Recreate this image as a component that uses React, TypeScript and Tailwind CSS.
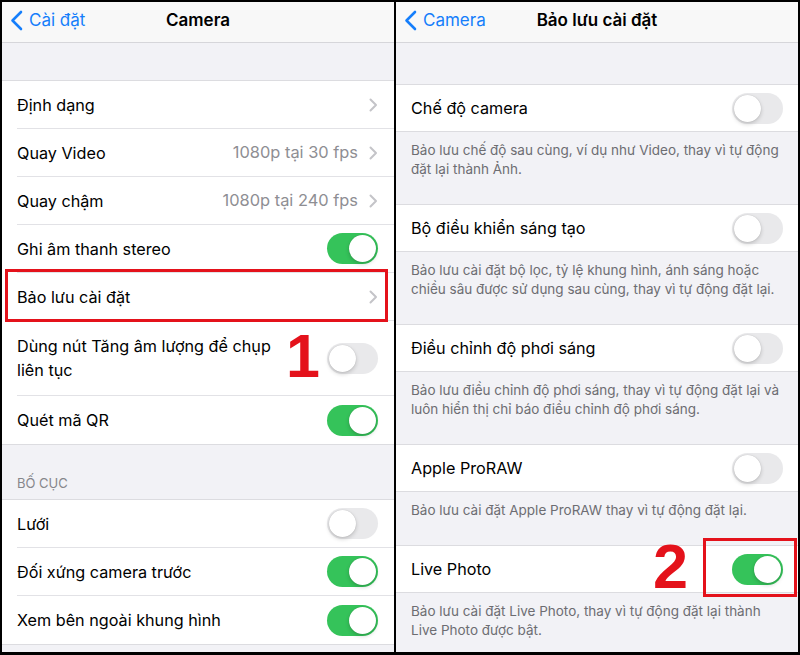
import React from "react";

type RowType = {
  label: React.ReactNode;
  value?: string;
  chevron?: boolean;
  toggle?: boolean;
  on?: boolean;
  tall?: boolean;
};

const Toggle = ({ on }: { on?: boolean }) => (
  <div
    className={`relative h-[31px] w-[51px] shrink-0 rounded-full ${
      on ? "bg-[#35c35a]" : "bg-[#e9e9eb]"
    }`}
  >
    <div
      className={`absolute top-[2px] h-[27px] w-[27px] rounded-full bg-white shadow-[0_2px_4px_rgba(0,0,0,0.18),0_0_1px_rgba(0,0,0,0.2)] ${
        on ? "left-[22px]" : "left-[2px]"
      }`}
    />
  </div>
);

const Chevron = () => (
  <svg width="9" height="14" viewBox="0 0 9 14" className="shrink-0">
    <polyline
      points="1.5,1.5 7,7 1.5,12.5"
      fill="none"
      stroke="#c4c4c8"
      strokeWidth="2"
      strokeLinecap="round"
      strokeLinejoin="round"
    />
  </svg>
);

const BackChevron = () => (
  <svg width="13" height="21" viewBox="0 0 13 21" className="shrink-0">
    <polyline
      points="11,2 2.5,10.5 11,19"
      fill="none"
      stroke="#157efb"
      strokeWidth="2.6"
      strokeLinecap="round"
      strokeLinejoin="round"
    />
  </svg>
);

const NavBar = ({ back, title }: { back: string; title: string }) => (
  <div className="relative flex h-[41px] items-center border-b border-[#d6d6da] bg-[#f8f8f8] pb-[3px]">
    <div className="flex items-center gap-[6px] pl-[8px] text-[17px] text-[#157efb]">
      <BackChevron />
      <span>{back}</span>
    </div>
    <div className="absolute inset-x-0 top-0 flex h-[38px] items-center justify-center text-[17px] font-semibold text-black">
      {title}
    </div>
  </div>
);

const Group = ({ rows }: { rows: RowType[] }) => (
  <div className="border-y border-[#dcdce0] bg-white pl-[15px]">
    {rows.map((r, i) => (
      <div
        key={i}
        className={`flex items-center pr-[16px] ${
          r.tall ? "py-[13px]" : "h-[48px]"
        } ${i < rows.length - 1 ? "border-b border-[#e2e2e6]" : ""}`}
      >
        <div className="flex-1 text-[16.2px] leading-[24px] text-black">
          {r.label}
        </div>
        {r.value && (
          <span className="mr-[11px] text-[16.4px] text-[#8e8e93]">
            {r.value}
          </span>
        )}
        {r.chevron && <Chevron />}
        {r.toggle && <Toggle on={r.on} />}
      </div>
    ))}
  </div>
);

const SettingWithNote = ({
  label,
  on,
  note,
}: {
  label: string;
  on?: boolean;
  note: React.ReactNode;
}) => (
  <div>
    <div className="flex h-[48px] items-center border-y border-[#dcdce0] bg-white pl-[15px] pr-[15px]">
      <div className="flex-1 text-[16.2px] text-black">{label}</div>
      <Toggle on={on} />
    </div>
    <div className="px-[15px] pb-[25px] pt-[9px] text-[13.5px] leading-[19px] text-[#6d6d72]">
      {note}
    </div>
  </div>
);

export default function App() {
  const group1: RowType[] = [
    { label: "Định dạng", chevron: true },
    { label: "Quay Video", value: "1080p tại 30 fps", chevron: true },
    { label: "Quay chậm", value: "1080p tại 240 fps", chevron: true },
    { label: "Ghi âm thanh stereo", toggle: true, on: true },
    { label: "Bảo lưu cài đặt", chevron: true },
    {
      label: (
        <>
          Dùng nút Tăng âm lượng để chụp
          <br />
          liên tục
        </>
      ),
      toggle: true,
      tall: true,
    },
    { label: "Quét mã QR", toggle: true, on: true },
  ];

  const group2: RowType[] = [
    { label: "Lưới", toggle: true },
    { label: "Đối xứng camera trước", toggle: true, on: true },
    { label: "Xem bên ngoài khung hình", toggle: true, on: true },
  ];

  return (
    <div
      className="flex h-[655px] w-[800px] gap-[2px] bg-black p-[2px] pb-[3px]"
      style={{ fontFamily: "Inter, 'Noto Sans', sans-serif" }}
    >
      {/* left panel */}
      <div className="relative w-[392px] shrink-0 overflow-hidden bg-[#f2f2f6]">
        <NavBar back="Cài đặt" title="Camera" />
        <div className="h-[37px]" />
        <Group rows={group1} />
        <div className="flex h-[54px] items-end px-[15px] pb-[6px] text-[13px] uppercase text-[#86868b]">
          Bố cục
        </div>
        <Group rows={group2} />

        <div className="absolute left-[3px] top-[267px] h-[53px] w-[383px] border-[3px] border-[#e4121b]" />
        <div
          className="absolute left-[284px] top-[324px] text-[61px] font-bold leading-none text-[#e4121b]"
          style={{ fontFamily: "'Liberation Sans', Arial, sans-serif" }}
        >
          1
        </div>
      </div>

      {/* right panel */}
      <div className="relative flex-1 overflow-hidden bg-[#f2f2f6]">
        <NavBar back="Camera" title="Bảo lưu cài đặt" />
        <div className="h-[41px]" />
        <SettingWithNote
          label="Chế độ camera"
          note={
            <>
              Bảo lưu chế độ sau cùng, ví dụ như Video, thay vì tự động
              <br />
              đặt lại thành Ảnh.
            </>
          }
        />
        <SettingWithNote
          label="Bộ điều khiển sáng tạo"
          note={
            <>
              Bảo lưu cài đặt bộ lọc, tỷ lệ khung hình, ánh sáng hoặc
              <br />
              chiều sâu được sử dụng sau cùng, thay vì tự động đặt lại.
            </>
          }
        />
        <SettingWithNote
          label="Điều chỉnh độ phơi sáng"
          note={
            <>
              Bảo lưu điều chỉnh độ phơi sáng, thay vì tự động đặt lại và
              <br />
              luôn hiển thị chỉ báo điều chỉnh độ phơi sáng.
            </>
          }
        />
        <SettingWithNote
          label="Apple ProRAW"
          note={<>Bảo lưu cài đặt Apple ProRAW thay vì tự động đặt lại.</>}
        />
        <SettingWithNote
          label="Live Photo"
          on
          note={
            <>
              Bảo lưu cài đặt Live Photo, thay vì tự động đặt lại thành
              <br />
              Live Photo được bật.
            </>
          }
        />

        <div className="absolute left-[307px] top-[536px] h-[59px] w-[94px] border-[3px] border-[#e4121b]" />
        <div
          className="absolute left-[257px] top-[533px] text-[63px] font-bold leading-none text-[#e4121b]"
          style={{ fontFamily: "'Liberation Sans', Arial, sans-serif" }}
        >
          2
        </div>
      </div>
    </div>
  );
}
